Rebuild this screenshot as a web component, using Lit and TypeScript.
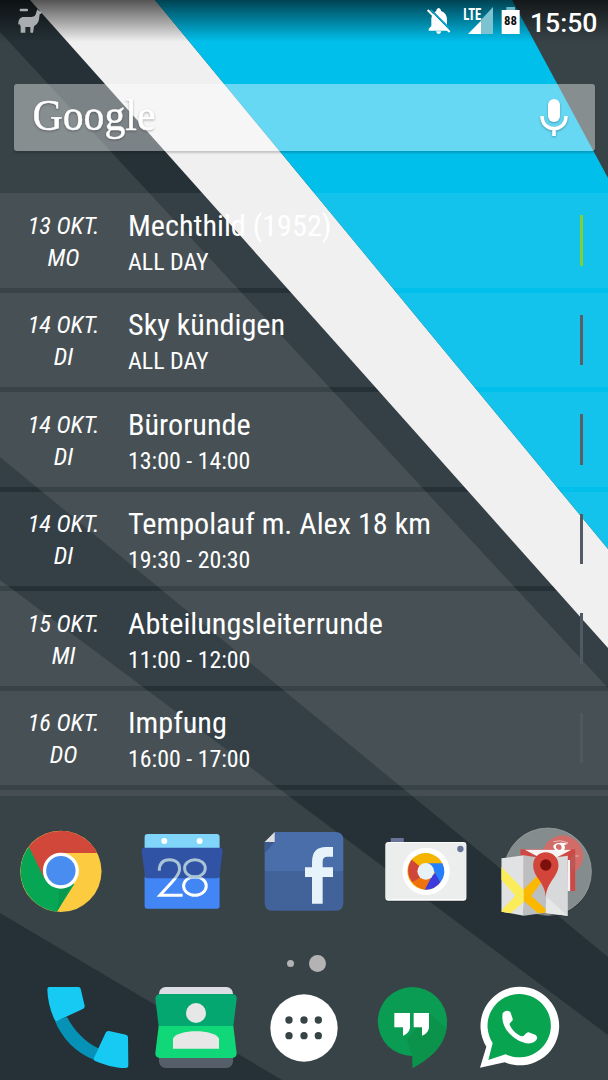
import { LitElement, html, css, svg } from 'lit';
import { customElement, property } from 'lit/decorators.js'

interface CalendarEntry {
    date: string;
    day: string;
    title: string;
    time: string;
    color: string;
}

const entries: CalendarEntry[] = [
    { date: '13 OKT.', day: 'MO', title: 'Mechthild (1952)', time: 'ALL DAY', color: '#80d03a' },
    { date: '14 OKT.', day: 'DI', title: 'Sky kündigen', time: 'ALL DAY', color: '#5d5e64' },
    { date: '14 OKT.', day: 'DI', title: 'Bürorunde', time: '13:00 - 14:00', color: '#5d5e64' },
    { date: '14 OKT.', day: 'DI', title: 'Tempolauf m. Alex 18 km', time: '19:30 - 20:30', color: '#535b65' },
    { date: '15 OKT.', day: 'MI', title: 'Abteilungsleiterrunde', time: '11:00 - 12:00', color: '#505863' },
    { date: '16 OKT.', day: 'DO', title: 'Impfung', time: '16:00 - 17:00', color: '#4f5762' },
];

const chrome = svg`
    <svg viewBox="38.4 129 288 288">
        <circle cx="182" cy="274" r="122" fill="#fdcb3f"/>
        <path d="M182 274L86 200A122 122 0 0 0 170 395L222 313Z" fill="#06a655"/>
        <path d="M178 326L216 312L170 395L175 365Z" fill="#07984f"/>
        <path d="M86 200A122 122 0 0 1 291 219H182L132 295Z" fill="#d1483b"/>
        <circle cx="182" cy="272" r="54" fill="#fff"/>
        <circle cx="182" cy="272" r="44" fill="#4a8df0"/>
    </svg>`;

const calendar = svg`
    <svg viewBox="403.2 129 288 288">
        <path d="M435 215V171Q435 162 444 162H651Q660 162 660 171V215Z" fill="#81d4fa"/>
        <circle cx="494" cy="183" r="9" fill="#fff"/>
        <circle cx="600" cy="183" r="9" fill="#fff"/>
        <path d="M435 290H660V378Q660 386 652 386H443Q435 386 435 378Z" fill="#4285f4"/>
        <path d="M426 211Q425 203 434 203H661Q669 203 669 211L660 288Q659 295 652 295H443Q437 295 436 288Z" fill="#3053a6"/>
        <g fill="none" stroke-width="9">
            <g stroke="#a9c4d4" clip-path="url(#top)">
                <path d="M479 272C479 250 491 239 510 239C529 239 540 250 540 266C540 280 530 292 518 305L481 346H549"/>
                <ellipse cx="586" cy="265" rx="31" ry="26"/><ellipse cx="586" cy="318" rx="34" ry="28"/>
            </g>
            <g stroke="#fff" clip-path="url(#bottom)">
                <path d="M479 272C479 250 491 239 510 239C529 239 540 250 540 266C540 280 530 292 518 305L481 346H549"/>
                <ellipse cx="586" cy="265" rx="31" ry="26"/><ellipse cx="586" cy="318" rx="34" ry="28"/>
            </g>
        </g>
        <clipPath id="top"><path d="M420 200H680V295H420Z"/></clipPath>
        <clipPath id="bottom"><path d="M420 295H680V390H420Z"/></clipPath>
    </svg>`;

const facebook = svg`
    <svg viewBox="48 129 288 288">
        <path d="M104 156H286Q310 156 310 180V274H74V186Z" fill="#4a6ea9"/>
        <path d="M74 273H310V368Q310 392 286 392H98Q74 392 74 368Z" fill="#41639a"/>
        <path d="M74 186H104L74 219Z" fill="#3c5a8f"/>
        <path d="M104 156V186H74Z" fill="#dedede"/>
        <path d="M216 371V291H195V262H216V246Q216 201 258 201H279V230H262Q248 230 248 245V262H279V291H248V371Z" fill="#e6f3fb"/>
    </svg>`;

const camera = svg`
    <svg viewBox="412.8 129 288 288">
        <rect x="451" y="174" width="39" height="16" fill="#68739a"/>
        <rect x="435" y="189" width="243" height="176" rx="9" fill="#1d282d" opacity=".5"/>
        <rect x="435" y="186" width="243" height="176" rx="9" fill="#fff"/>
        <rect x="436" y="188" width="241" height="170" rx="8" fill="#eceeed"/>
        <circle cx="660" cy="207" r="9.500" fill="#68739a"/>
        <circle cx="557" cy="274" r="71" fill="#fff"/>
        <circle cx="556" cy="274" r="55" fill="#f4b400"/>
        <path d="M556 274L514 239A55 55 0 0 0 516 307L545 296Z" fill="#d1463a"/>
        <path d="M516 307L547 288L573 295L553 329A55 55 0 0 1 516 307Z" fill="#ee730d"/>
        <path d="M553 329L576 286L588 276L600 307A55 55 0 0 1 553 329Z" fill="#3d3bdc"/>
        <path d="M600 307L575 263L560 250H606A55 55 0 0 1 600 307Z" fill="#2480fa"/>
        <circle cx="556" cy="274" r="25" fill="#e6f2f8"/>
    </svg>`;

const folder = svg`
    <svg viewBox="57.600 69 288 288">
        <circle cx="204" cy="219" r="132" fill="#1c282c" opacity=".35"/>
        <circle cx="204" cy="215" r="131" fill="#858c8e" stroke="#a1a6a8" stroke-width="2"/>
        <circle cx="249" cy="167" r="61" fill="#d26c68"/>
        <path d="M221 125Q240 118 264 128M286 168H296" stroke="#eebdba" fill="none" stroke-width="3"/>
        <path d="M122 148H286V273H122Z" fill="#ce4944"/>
        <path d="M135 149H275L205 186ZM264 180H271V273H262Z" fill="#f5f3f3"/>
        <path d="M271 174L286 158V205L271 220Z" fill="#bd5755"/>
        <path d="M226 149C210 134 232 123 265 131L253 135C263 151 241 161 228 153M229 136C225 148 240 154 245 146C248 137 238 128 229 136" fill="#fff" fill-rule="evenodd"/>
        <path d="M65 339L132 350L197 342L264 350V344L132 340Z" fill="#293135" opacity=".5"/>
        <path d="M65 175L132 166V347L65 335Z" fill="#e1e2e3"/>
        <path d="M132 166L197 176V338L132 347Z" fill="#bdbec0"/>
        <path d="M197 176L264 167V348L197 339Z" fill="#d8d9db"/>
        <path d="M200 290L264 347L197 339Z" fill="#e6e7e7"/>
        <path d="M65 201L132 270V306L92 340L66 335V329L107 287L65 240Z" fill="#fbed5a"/>
        <path d="M132 268L184 216L191 238L154 288L197 326V338L175 340L132 303Z" fill="#fbb800"/>
        <path d="M198 291C195 244 160 233 160 195A38 38 0 0 1 236 195C236 231 202 244 198 291Z" fill="#d3453a"/>
        <circle cx="198" cy="195" r="17" fill="#7c100c"/>
    </svg>`;

const phone = svg`
    <svg viewBox="120 117 288 288">
        <path d="M165 243L201 231C224 274 255 305 295 325L282 359C226 338 185 293 165 243Z" fill="#0592b6"/>
        <path d="M148 141H235Q241 141 242 146L254 197Q255 203 250 206L171 243Q166 245 163 238C149 207 143 178 142 148Q142 141 148 141Z" fill="#16caf4"/>
        <path d="M327 273L378 284Q384 286 384 292L385 376Q385 384 377 384C344 384 312 374 284 362Q279 359 282 353L317 278Q320 272 327 273Z" fill="#16caf4"/>
    </svg>`;

const contacts = svg`
    <svg viewBox="444 117 288 288">
        <rect x="477" y="141" width="222" height="60" rx="20" fill="#dcdee3"/>
        <rect x="477" y="320" width="222" height="64" rx="20" fill="#555e69"/>
        <path d="M478 162H698Q711 164 710 177L700 259H476L466 177Q466 165 478 162Z" fill="#05a770"/>
        <path d="M476 258H700L710 340Q710 353 697 354H479Q466 353 466 340Z" fill="#10d878"/>
        <circle cx="588" cy="219" r="30" fill="#e6e7e6"/>
        <path d="M519 326V296C529 266 647 266 657 296V326Z" fill="#e6e7e6"/>
    </svg>`;

const apps = svg`
    <svg viewBox="48 117 288 288">
        <circle cx="192" cy="264" r="101" fill="#fff"/>
        ${[240, 287].map((y) => [147, 192, 235].map((x) => svg`<circle cx=${x} cy=${y} r="11" fill="#384347"/>`))}
    </svg>`;

const hangouts = svg`
    <svg viewBox="372 117 288 288">
        <path d="M517 141A104 104 0 0 1 621 245C621 313 575 352 518 384L517 348A103.500 103.500 0 0 1 517 141Z" fill="#0b9c53"/>
        <path d="M567 219L620 265C612 319 568 358 518 384V348L500 300Z" fill="#0d914a" opacity=".8"/>
        <path d="M463 219H510V264Q506 281 489 287V262H463ZM521 219H567V264Q563 281 546 287V262H521Z" fill="#fff"/>
    </svg>`;

const whatsapp = svg`
    <svg viewBox="696 117 288 288">
        <path d="M720 383L739 320A118 118 0 1 1 794 367Z" fill="#fff"/>
        <path d="M745 360L758 309A95 95 0 1 1 797 343Z" fill="#08a450"/>
        <path d="M788 220C794 210 804 210 811 216L818 236C820 244 807 248 809 254C817 272 833 286 847 289C854 289 858 276 866 277L887 285C896 293 890 302 881 307C850 323 778 276 788 220Z" fill="#fff"/>
    </svg>`;

@customElement('status-bar')
export class StatusBar extends LitElement {
    @property({ type: String }) time = '';

    static styles = [
        css`
            :host{
                display: flex;
                height: 42px;
                box-sizing: border-box;
                padding: 6px 10px 0 14px;
                background: linear-gradient(rgba(0, 0, 0, .65), rgba(0, 0, 0, 0));
                font-family: Roboto, sans-serif;
            }

            svg{
                height: 29.33px;
                flex: none;
            }

            .llama{
                width: 32px;
                margin-right: auto;
            }

            .bell{
                width: 26px;
                margin-right: 10px;
            }

            .signal{
                width: 32px;
                margin-right: 6px;
            }

            .battery{
                width: 22px;
                margin-right: 8px;
            }

            .clock{
                width: 68px;
                font-size: 26.6px;
                font-weight: 500;
                line-height: 33px;
                color: #fff;
                white-space: nowrap;
            }

            text{
                font-family: "Roboto Condensed", Roboto, sans-serif;
                font-weight: 700;
            }
        `
    ];

    render() {
        return html`
            <svg class="llama" viewBox="42 18 96 88">
                <rect x="59" y="26" width="25" height="8" rx="3" fill="#a9adaf"/>
                <path d="M55 74C54 58 61 51 72 51H94C104 51 107 46 109 37L112 28L117 33L125 36Q126 42 119 43L117 58C116 68 109 75 102 79L99 98H91V81H76V98H62V79L58 72Z" fill="#a9adaf"/>
            </svg>
            <svg class="bell" viewBox="366 18 78 88">
                <path d="M374 92V87L382 78V55Q383 46 388 41L437 92ZM391 37L397 33V30Q404 18 411 30V33Q429 39 429 60V75ZM396 94H412Q410 102 404 102Q398 102 396 94Z" fill="#fff"/>
                <path d="M371 30L437 96" stroke="#fff" stroke-width="6"/>
                <path d="M380 29L436 85" stroke="#06a7cd" stroke-width="4"/>
            </svg>
            <svg class="signal" viewBox="474 18 96 88">
                <path d="M531 60L567 21V102H531Z" fill="#7cc3d2"/>
                <path d="M492 102L531 62V102Z" fill="#fff"/>
                <text x="478" y="59" font-size="47" textLength="54" lengthAdjust="spacingAndGlyphs" fill="#fff">LTE</text>
            </svg>
            <svg class="battery" viewBox="588 18 66 88">
                <path d="M607 21H633V31H607Z" fill="#6bb7c8"/>
                <path d="M593 30H647V102H593Z" fill="#fff"/>
                <text x="600" y="76" font-size="40" textLength="39" lengthAdjust="spacingAndGlyphs" fill="#111">88</text>
            </svg>
            <div class="clock">${this.time}</div>
        `;
    }
}

@customElement('search-bar')
export class SearchBar extends LitElement {
    static styles = [
        css`
            :host{
                display: flex;
                justify-content: space-between;
                height: 67px;
                margin: 42px 13.5px 0;
                border-radius: 3px;
                background-color: rgba(255, 255, 255, .4);
                box-shadow: 0 2px 2px rgba(0, 0, 0, .18);
            }

            svg{
                height: 67px;
                filter: drop-shadow(0 1px 1px rgba(0, 0, 0, .3));
            }

            .logo{
                width: 150px;
                font-family: "Liberation Serif", serif;
            }

            .mic{
                width: 40px;
                margin-right: 20.5px;
            }
        `
    ];

    render() {
        return html`
            <svg class="logo" viewBox="0 0 150 67">
                <text x="18.500" y="45.500" font-size="45" textLength="123" lengthAdjust="spacingAndGlyphs" fill="#fff" stroke="#fff" stroke-width=".5">Google</text>
            </svg>
            <svg class="mic" viewBox="0 0 40 67">
                <rect x="14" y="15" width="12" height="23" rx="6" fill="#fff"/>
                <path d="M8 32C8 49 32 49 32 32M20 45V52" fill="none" stroke="#fff" stroke-width="3.600"/>
            </svg>
        `;
    }
}

@customElement('calendar-row')
export class CalendarRow extends LitElement {
    @property({ type: Object }) entry!: CalendarEntry;

    static styles = [
        css`
            :host{
                display: flex;
                height: 94.5px;
                background-color: rgba(240, 240, 240, .083);
                color: #fff;
                font-family: "Roboto Condensed", Roboto, sans-serif;
                font-stretch: 75%;
                font-size: 23.9px;
                white-space: nowrap;
            }

            .date{
                width: 127px;
                padding-top: 16.5px;
                font-size: 24.3px;
                line-height: 32px;
                text-align: center;
                font-style: italic;
            }

            .info{
                flex: 1;
                padding: 14.5px 0 0 1px;
                line-height: 36px;
            }

            .title{
                font-size: 30.2px;
            }

            .marker{
                width: 3px;
                height: 50.5px;
                margin: 22px 25px 0 0;
            }
        `
    ];

    render() {
        return html`
            <div class="date">
                <div>${this.entry.date}</div>
                <div>${this.entry.day}</div>
            </div>
            <div class="info">
                <div class="title">${this.entry.title}</div>
                <div>${this.entry.time}</div>
            </div>
            <div class="marker" style="background-color: ${this.entry.color}"></div>
        `;
    }
}

@customElement('app-root')
export class AppRoot extends LitElement {
    static styles = [
        css`
            :host{
                display: flex;
                flex-direction: column;
                position: relative;
                width: 608px;
                height: 1080px;
                overflow: hidden;
                background-color: #384347;
            }

            .wallpaper{
                position: absolute;
                inset: 0;
                width: 608px;
                height: 1080px;
            }

            .screen{
                position: relative;
                display: flex;
                flex-direction: column;
            }

            .agenda{
                display: flex;
                flex-direction: column;
                gap: 5px;
                height: 603px;
                margin-top: 42px;
                overflow: hidden;
            }

            .agenda > *{
                flex: none;
            }

            .next{
                height: 10px;
                background-color: rgba(240, 240, 240, .07);
            }

            .icons{
                display: grid;
                grid-template-columns: repeat(5, 1fr);
                justify-items: center;
                margin-top: 27px;
            }

            .icons svg{
                display: block;
                width: 96px;
                height: 96px;
            }

            .pages{
                display: flex;
                justify-content: center;
                align-items: center;
                gap: 15px;
                height: 17px;
                margin-top: 35.5px;
                padding-left: 5px;
            }

            .pages div{
                width: 7px;
                height: 7px;
                border-radius: 50%;
                background-color: #b3b3b4;
            }

            .pages .current{
                width: 17px;
                height: 17px;
            }

            .dock{
                margin-top: 7.5px;
                padding: 0 34px;
            }
        `
    ];

    render() {
        return html`
            <svg class="wallpaper" viewBox="0 0 608 1080">
                <path d="M0 32V0H31L608 648V688ZM0 457L608 957V1035L0 580ZM0 913L282 1080H0Z" fill="#253137"/>
                <path d="M30 0H155L608 549V648Z" fill="#f0f0f0"/>
                <path d="M155 0H512L608 178V549Z" fill="#00bfeb"/>
            </svg>
            <div class="screen">
                <status-bar time="15:50"></status-bar>
                <search-bar></search-bar>
                <div class="agenda">
                    ${entries.map((entry) => html`<calendar-row .entry=${entry}></calendar-row>`)}
                    <div class="next"></div>
                </div>
                <div class="icons">
                    ${[chrome, calendar, facebook, camera, folder]}
                </div>
                <div class="pages">
                    <div></div>
                    <div class="current"></div>
                </div>
                <div class="icons dock">
                    ${[phone, contacts, apps, hangouts, whatsapp]}
                </div>
            </div>
        `;
    }
}
